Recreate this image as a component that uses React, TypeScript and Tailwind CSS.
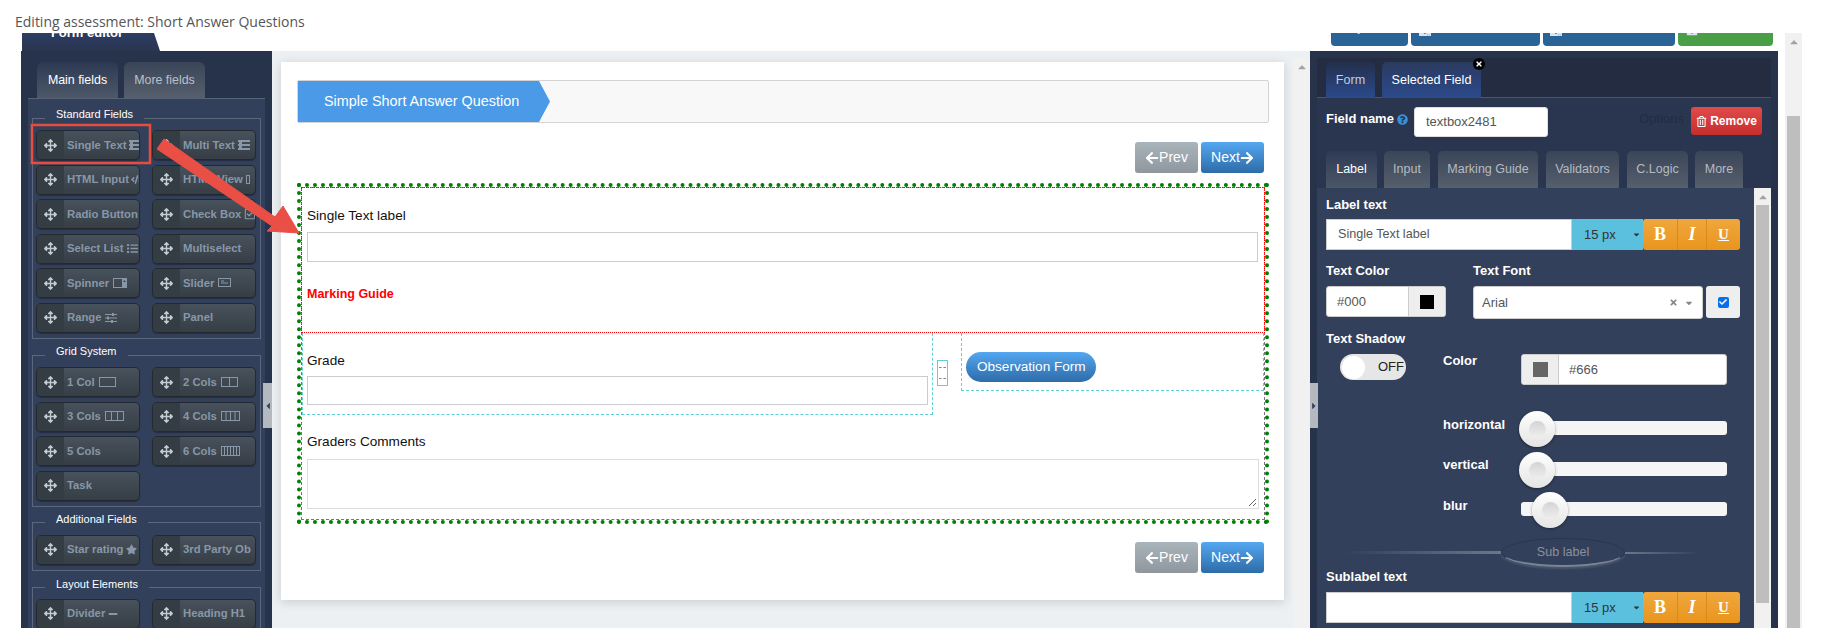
import React from "react";
import { FaArrowsAlt, FaRegTrashAlt, FaQuestionCircle, FaTimes, FaArrowLeft, FaArrowRight, FaStar, FaRegCheckSquare, FaCheck, FaCaretUp, FaCaretLeft, FaCaretRight, FaCaretDown, FaCode, FaMinus, FaList, FaDownload, FaSave } from "react-icons/fa";

const Cols = ({ n, w = 16 }: { n: number; w?: number }) => (
  <svg width={w + 1} height="11" viewBox={`0 0 ${w + 1} 11`} fill="none" stroke="currentColor" className="shrink-0 ml-[4px]">
    <rect x="0.5" y="0.5" width={w} height="9" />
    {Array.from({ length: n - 1 }).map((_, i) => (
      <line key={i} x1={0.5 + ((i + 1) * w) / n} x2={0.5 + ((i + 1) * w) / n} y1="0.5" y2="9.5" />
    ))}
  </svg>
);
const TextIc = () => (
  <svg width="12" height="10" viewBox="0 0 12 10" fill="currentColor" className="shrink-0 ml-[3px]">
    <rect x="0" y="0" width="12" height="2" /><rect x="0" y="4" width="12" height="2" /><rect x="0" y="8" width="12" height="2" /><rect x="1" y="1" width="3" height="8" fill="#8797a8" />
  </svg>
);

const Btn = ({ label, icon }: { label?: string; icon?: React.ReactNode }) => (
  <div className="flex h-[30px] w-[104px] rounded-[5px] border border-[#23292f] overflow-hidden bg-gradient-to-b from-[#48525c] to-[#363d45] text-[#8797a8] font-bold text-[11.3px] shadow-[0_1px_1px_rgba(0,0,0,0.3)]">
    <div className="w-[27px] shrink-0 flex items-center justify-center bg-[#343c44] text-[#c2cbd3] text-[13px]"><FaArrowsAlt /></div>
    <div className="flex items-center pl-[3px] whitespace-nowrap">{label}{icon}</div>
  </div>
);

const Field = ({ title, children, cls, lb = "pb-[8px]" }: { title: string; children: React.ReactNode; cls: string; lb?: string }) => (
  <fieldset className={`mx-[4px] border border-[#5c677b] px-[3px] pt-[1px] pb-[5px] ${cls}`}>
    <legend className={`ml-[9px] px-[11px] ${lb} text-[11px] leading-[14px] text-white`}>{title}</legend>
    <div className="grid grid-cols-[104px_104px] gap-x-[12px] gap-y-[4.5px]">{children}</div>
  </fieldset>
);

const WizBtn = ({ prev }: { prev?: boolean }) => (
  <div className={`flex items-center justify-center w-[63px] h-[31px] rounded-[3px] text-white text-[14px] ${prev ? "bg-gradient-to-b from-[#a9b5bb] to-[#8f979d]" : "bg-gradient-to-b from-[#54a7f1] to-[#2d6ca8]"}`}>
    {prev ? <><FaArrowLeft className="text-[14px]" />Prev</> : <>Next<FaArrowRight className="text-[14px]" /></>}
  </div>
);

const STab = ({ label, w, active, ml }: { label: string; w: string; active?: boolean; ml: string }) => (
  <div className={`${w} ${ml} h-[37px] rounded-t-[5px] flex items-center justify-center text-[12.5px] bg-gradient-to-b ${active ? "from-[#2f3b55] to-[#4b5766] text-white" : "from-[#3a4559] to-[#565f6b] text-[#b4bbc4]"}`}>{label}</div>
);

const Fmt = () => (
  <>
    <div className="w-[71px] bg-[#5bc0de] flex items-center pl-[12px] text-[13px] text-[#333] relative">15 px<FaCaretDown className="absolute right-[2px] text-[9px]" /></div>
    <div className="w-[34px] bg-gradient-to-b from-[#f0a73c] to-[#e8951a] rounded-l-[3px] flex items-center justify-center text-white font-bold text-[18px] font-['Liberation_Serif',serif]">B</div>
    <div className="w-[30px] bg-gradient-to-b from-[#f0a73c] to-[#e8951a] border-x border-[#d98a18] flex items-center justify-center text-white font-bold italic text-[18px] font-['Liberation_Serif',serif]">I</div>
    <div className="w-[33px] bg-gradient-to-b from-[#f0a73c] to-[#e8951a] rounded-r-[3px] flex items-center justify-center text-white font-bold underline text-[15px] font-['Liberation_Serif',serif]">U</div>
  </>
);

const Slider = ({ left, mt, label, lmt }: { left: string; mt: string; label: string; lmt: string }) => (
  <div className={`flex ${mt}`}>
    <div className={`w-[78px] ${lmt} text-white font-bold text-[13px] leading-[15px]`}>{label}</div>
    <div className="w-[206px] h-[14px] rounded-[3px] bg-[#f5f5f5] relative">
      <div className={`absolute ${left} -top-[10px] w-[36px] h-[36px] rounded-full bg-gradient-to-b from-[#fff] to-[#e4e4e4] shadow-[0_1px_3px_rgba(0,0,0,0.4)] flex items-center justify-center`}>
        <div className="w-[17px] h-[17px] rounded-full bg-gradient-to-b from-[#d4d4d4] to-[#efefef]" />
      </div>
    </div>
  </div>
);

const Scroll = ({ cls, thumb }: { cls: string; thumb: string }) => (
  <div className={`w-[17px] shrink-0 bg-[#f1f1f1] flex flex-col items-center ${cls}`}>
    <FaCaretUp className="text-[#a3a3a3] text-[12px] mt-[3px] shrink-0" />
    <div className={`w-[13px] bg-[#bebebe] ${thumb}`} />
  </div>
);

export default function App() {
  return (
    <div className="relative w-[1821px] h-[628px] overflow-hidden bg-white font-['Liberation_Sans',Arial,sans-serif]">
      <div className="h-[33px] pl-[15px] pt-[12px] text-[14px] leading-[19px] text-[#555] font-['Open_Sans',sans-serif]">Editing assessment: Short Answer Questions</div>
      <div className="flex h-[595px] pl-[21px]">
        <div className="w-[1757px] flex flex-col shrink-0">
          <div className="h-[18px] shrink-0 overflow-hidden flex relative">
            <div className="ml-[1px] w-[138px] h-[18px] bg-gradient-to-b from-[#2c3c63] to-[#2a3550] [clip-path:polygon(0_0,132px_0,100%_100%,0_100%)] relative">
              <div className="-mt-[9px] text-center pr-[8px] text-white font-bold text-[13px] leading-[18px]">Form editor</div>
            </div>
            <div className="ml-auto mr-[5px] flex gap-[3px] h-[34px] -mt-[21px] text-[#dbe6f0] text-[13px] font-bold">
              <div className="w-[77px] bg-[#2a6496] rounded-b-[4px] flex items-end justify-center pb-[10px]">Update</div>
              <div className="w-[129px] bg-[#2a6496] rounded-b-[4px] flex items-end justify-center gap-[5px] pb-[10px]"><FaDownload className="text-[12px]" />Grader Preview</div>
              <div className="w-[132px] bg-[#2a6496] rounded-b-[4px] flex items-end justify-center gap-[5px] pb-[10px]"><FaDownload className="text-[12px]" />Student Preview</div>
              <div className="w-[95px] bg-[#4a9e46] rounded-b-[4px] flex items-end justify-center gap-[5px] pb-[10px]"><FaSave className="text-[12px]" />Save form</div>
            </div>
          </div>
          <div className="flex-1 flex bg-[#27324b] min-h-0">
            {/* left */}
            <div className="w-[251px] shrink-0 pt-[11px]">
              <div className="flex h-[36px] pl-[16px] gap-[6px]">
                <div className="w-[81px] rounded-t-[6px] bg-gradient-to-b from-[#2d3953] to-[#4d5968] text-white text-[12.4px] flex items-center justify-center">Main fields</div>
                <div className="w-[81px] rounded-t-[6px] bg-gradient-to-b from-[#3a4559] to-[#565f6c] text-[#b9c0c8] text-[12.4px] flex items-center justify-center">More fields</div>
              </div>
              <div className="ml-[7px] w-[237px] h-[530px] overflow-hidden bg-[#33405b] border-t border-[#566176]">
                <Field title="Standard Fields" cls="mt-[8px]">
                  <Btn label="Single Text" icon={<TextIc />} />
                  <Btn label="Multi Text" icon={<TextIc />} />
                  <Btn label="HTML Input" icon={<FaCode className="ml-[2px] text-[11px]" />} />
                  <Btn label="HTML View" icon={<span className="ml-[3px] inline-block w-[4px] h-[9px] border border-current" />} />
                  <Btn label="Radio Button" />
                  <Btn label="Check Box" icon={<FaRegCheckSquare className="ml-[3px] text-[12px]" />} />
                  <Btn label="Select List" icon={<FaList className="ml-[3px] text-[11px]" />} />
                  <Btn label="Multiselect" />
                  <Btn label="Spinner" icon={<svg width="14" height="10" viewBox="0 0 14 10" fill="currentColor" className="ml-[4px]"><path d="M0 0h9v1H1v8h8v1H0zM9 0h5v10H9zM10 4h3L11.500 2zM10 6h3l-1.500 2z" /></svg>} />
                  <Btn label="Slider" icon={<svg width="13" height="11" viewBox="0 0 13 11" fill="none" stroke="currentColor" className="ml-[4px]"><rect x="0.500" y="0.500" width="12" height="8" /><path d="M3 5h7M3 3h3" /></svg>} />
                  <Btn label="Range" icon={<svg width="12" height="10" viewBox="0 0 12 10" stroke="currentColor" fill="none" className="ml-[3px]"><path d="M0 1.500h12M0 5h12M0 8.500h12" /><path d="M8 0v3M3 3.500v3M7 7v3" strokeWidth="2" /></svg>} />
                  <Btn label="Panel" />
                </Field>
                <Field title="Grid System" cls="mt-[5.5px]">
                  <Btn label="1 Col" icon={<Cols n={1} />} />
                  <Btn label="2 Cols" icon={<Cols n={2} />} />
                  <Btn label="3 Cols" icon={<Cols n={3} w={18} />} />
                  <Btn label="4 Cols" icon={<Cols n={4} w={18} />} />
                  <Btn label="5 Cols" />
                  <Btn label="6 Cols" icon={<Cols n={6} w={18} />} />
                  <Btn label="Task" />
                </Field>
                <Field title="Additional Fields" cls="mt-[5px]">
                  <Btn label="Star rating" icon={<FaStar className="ml-[2px] text-[11px]" />} />
                  <Btn label="3rd Party Ob" />
                </Field>
                <Field title="Layout Elements" cls="mt-[6px]" lb="pb-[7px]">
                  <Btn label="Divider" icon={<FaMinus className="ml-[3px] text-[10px]" />} />
                  <Btn label="Heading H1" />
                </Field>
              </div>
            </div>
            {/* center */}
            <div className="w-[1038px] shrink-0 bg-[#ecf0f3] flex relative">
              <div className="absolute -left-[9px] top-[332px] w-[9px] h-[45px] bg-[#b4b8bf] flex items-center justify-center text-[#33405b]"><FaCaretLeft className="text-[10px] shrink-0" /></div>
              <div className="absolute -right-[8px] top-[332px] w-[8px] h-[45px] bg-[#b4b8bf] flex items-center justify-center text-[#33405b] z-10"><FaCaretRight className="text-[10px] shrink-0" /></div>
              <div className="ml-[9px] mt-[11px] w-[1003px] h-[538px] bg-white shadow-[0_2px_10px_rgba(0,0,0,0.15)] pl-[16px] pr-[15px] pt-[18px] shrink-0">
                <div className="h-[43px] border border-[#d4d4d4] rounded-[2px] bg-[#f8f8f8] flex">
                  <div className="w-[252px] h-[41px] bg-[#4a9ae8] [clip-path:polygon(0_0,241px_0,100%_50%,241px_100%,0_100%)] text-white text-[14.4px] flex items-center pl-[26px]">Simple Short Answer Question</div>
                </div>
                <div className="flex justify-end pr-[5px] gap-[3px] mt-[19px]"><WizBtn prev /><WizBtn /></div>
                <div className="mt-[10px] h-[341px] border-[4px] border-dotted border-[#008000]">
                  <div className="h-full border border-dashed border-[#777] text-[13.6px] text-[#111]">
                    <div className="h-[146px] -mt-px -mx-px border border-dotted border-[#f00] pl-[5px] pr-[6px] pt-[18px]">
                      <div className="leading-[20px]">Single Text label</div>
                      <div className="mt-[6px] h-[30px] border border-[#ccc]" />
                      <div className="mt-[22px] text-[#f00] font-bold text-[12.5px] leading-[20px]">Marking Guide</div>
                    </div>
                    <div className="flex items-start">
                      <div className="w-[632px] h-[82px] border border-dashed border-t-0 border-[#5fd0d6] pl-[4px] pr-[4px] pt-[18px]">
                        <div className="leading-[20px]">Grade</div>
                        <div className="mt-[5px] h-[29px] border border-[#ccc]" />
                      </div>
                      <div className="ml-[4px] mt-[27px] w-[11px] h-[26px] border border-[#5fd0d6] flex flex-col items-center justify-center gap-[2px]">
                        <div className="w-[7px] h-[12px] border-y border-dashed border-[#888]" />
                      </div>
                      <div className="ml-[13px] w-[303px] h-[58px] border border-dashed border-t-0 border-[#5fd0d6] pl-[4px] pt-[19px]">
                        <div className="w-[130px] h-[30px] rounded-full bg-gradient-to-b from-[#54a7f1] to-[#2d6ca8] text-white text-[13.6px] flex items-center justify-center">Observation Form</div>
                      </div>
                    </div>
                    <div className="pl-[5px] pr-[5px] pt-[17px]">
                      <div className="leading-[20px]">Graders Comments</div>
                      <div className="mt-[7px] h-[50px] border border-[#ddd] relative">
                        <svg width="9" height="9" viewBox="0 0 9 9" stroke="#666" className="absolute right-[1px] bottom-[1px]"><path d="M1 8L8 1M5 8L8 5" /></svg>
                      </div>
                    </div>
                  </div>
                </div>
                <div className="flex justify-end pr-[5px] gap-[3px] mt-[18px]"><WizBtn prev /><WizBtn /></div>
              </div>
              <Scroll cls="ml-[9px] mt-[7px]" thumb="hidden" />
            </div>
            {/* right */}
            <div className="w-[468px] shrink-0 px-[7px] pt-[7px] flex flex-col min-h-0">
              <div className="h-[40px] shrink-0 bg-[#232c40] flex items-end pl-[9px] gap-[7px] border-b border-[#4c566a]">
                <div className="w-[49px] h-[36px] -mb-px rounded-t-[5px] bg-gradient-to-b from-[#232f4b] to-[#2b4a8c] text-[#c5ccd6] text-[12.6px] flex items-center justify-center">Form</div>
                <div className="w-[99px] h-[36px] -mb-px rounded-t-[5px] bg-gradient-to-b from-[#2b3a5f] to-[#2b4a8c] text-white text-[12.6px] flex items-center justify-center relative">
                  Selected Field
                  <div className="absolute -right-[4px] -top-[4px] w-[12px] h-[12px] rounded-full bg-black text-white flex items-center justify-center text-[8px]"><FaTimes /></div>
                </div>
              </div>
              <div className="h-[53px] shrink-0 bg-[#2a3550] flex pl-[9px] pr-[9px] relative">
                <div className="mt-[13px] text-white font-bold text-[13px] leading-[16px] flex items-center gap-[3px] h-[16px]">Field name <FaQuestionCircle className="text-[#3b8fd6] text-[11px]" /></div>
                <div className="ml-[6px] mt-[9px] w-[134px] h-[30px] bg-white rounded-[3px] border border-[#ddd] flex items-center pl-[11px] text-[13px] text-[#555]">textbox2481</div>
                <div className="ml-auto mt-[13px] text-[#232c40] text-[13px] leading-[16px]">Options</div>
                <div className="ml-[7px] mt-[9px] w-[71px] h-[28px] rounded-[3px] bg-gradient-to-b from-[#e04a4a] to-[#c72e2e] text-white font-bold text-[12px] flex items-center justify-center gap-[3px]"><FaRegTrashAlt className="text-[11px]" />Remove</div>
              </div>
              <div className="h-[37px] shrink-0 bg-[#2a3550] flex pl-[9px]">
                <STab label="Label" w="w-[51px]" ml="" active />
                <STab label="Input" w="w-[46px]" ml="ml-[7px]" />
                <STab label="Marking Guide" w="w-[100px]" ml="ml-[8px]" />
                <STab label="Validators" w="w-[73px]" ml="ml-[8px]" />
                <STab label="C.Logic" w="w-[61px]" ml="ml-[8px]" />
                <STab label="More" w="w-[48px]" ml="ml-[7px]" />
              </div>
              <div className="flex-1 flex min-h-0">
                <div className="w-[437px] shrink-0 bg-[#33405b] px-[9px] overflow-hidden">
                  <div className="mt-[9px] text-white font-bold text-[13px] leading-[16px]">Label text</div>
                  <div className="mt-[6px] flex h-[31px]">
                    <div className="w-[246px] bg-white border border-[#ccc] flex items-center pl-[11px] text-[12.6px] text-[#555]">Single Text label</div>
                    <Fmt />
                  </div>
                  <div className="mt-[13px] flex text-white font-bold text-[13px] leading-[16px]"><div className="w-[147px]">Text Color</div><div>Text Font</div></div>
                  <div className="mt-[7px] flex items-start">
                    <div className="flex h-[31px] w-[120px] rounded-[3px] overflow-hidden border border-[#ccc] bg-white">
                      <div className="flex-1 flex items-center pl-[10px] text-[13px] text-[#555]">#000</div>
                      <div className="w-[37px] bg-[#eee] border-l border-[#ccc] flex items-center justify-center"><div className="w-[14px] h-[14px] bg-black" /></div>
                    </div>
                    <div className="ml-[27px] w-[230px] h-[33px] rounded-[3px] bg-white border border-[#ccc] flex items-center pl-[8px] pr-[8px] text-[13px] text-[#555]">
                      Arial<FaTimes className="ml-auto text-[9px] text-[#888]" /><FaCaretDown className="ml-[6px] text-[10px] text-[#888]" />
                    </div>
                    <div className="ml-[3px] w-[34px] h-[32px] rounded-[3px] bg-[#eee] flex items-center justify-center"><div className="w-[11px] h-[11px] rounded-[2px] bg-[#0b6fe8] flex items-center justify-center text-white text-[8px]"><FaCheck /></div></div>
                  </div>
                  <div className="mt-[12px] text-white font-bold text-[13px] leading-[16px]">Text Shadow</div>
                  <div className="mt-[7px] flex items-start">
                    <div className="ml-[14px] w-[66px] h-[26px] rounded-full bg-[#e6e6e6] flex items-center pl-[2px] relative">
                      <div className="w-[23px] h-[23px] rounded-full bg-white" />
                      <span className="ml-[13px] text-[13px] text-[#222]">OFF</span>
                    </div>
                    <div className="ml-[37px] -mt-[1px] w-[78px] text-white font-bold text-[13px] leading-[16px]">Color</div>
                    <div className="flex h-[31px] w-[206px] rounded-[3px] overflow-hidden border border-[#ccc] bg-white">
                      <div className="w-[37px] bg-[#eee] border-r border-[#ccc] flex items-center justify-center"><div className="w-[15px] h-[15px] bg-[#666]" /></div>
                      <div className="flex items-center pl-[10px] text-[13px] text-[#555]">#666</div>
                    </div>
                  </div>
                  <div className="ml-[117px]">
                    <Slider left="-left-[2px]" mt="mt-[36px]" label="horizontal" lmt="-mt-[4px]" />
                    <Slider left="-left-[2px]" mt="mt-[27px]" label="vertical" lmt="-mt-[5px]" />
                    <Slider left="left-[11px]" mt="mt-[26px]" label="blur" lmt="-mt-[4px]" />
                  </div>
                  <div className="mt-[22px] flex items-center h-[29px] pl-[19px]">
                    <div className="w-[156px] h-[3px] bg-gradient-to-r from-transparent to-[#6d778a]" />
                    <div className="w-[124px] h-[29px] shrink-0 rounded-[50%] border border-[#2b3650] border-b-2 border-b-[#7b8494] shadow-[0_2px_2px_rgba(255,255,255,0.12)] flex items-center justify-center text-[12.6px] text-[#8a919c]">Sub label</div>
                    <div className="w-[75px] h-[2px] bg-gradient-to-l from-transparent to-[#6d778a]" />
                  </div>
                  <div className="mt-[2px] text-white font-bold text-[13px] leading-[16px]">Sublabel text</div>
                  <div className="mt-[7px] flex h-[31px]">
                    <div className="w-[246px] bg-white border border-[#ccc]" />
                    <Fmt />
                  </div>
                </div>
                <Scroll cls="" thumb="h-[398px] mt-[2px]" />
              </div>
            </div>
          </div>
        </div>
        <Scroll cls="ml-[7px]" thumb="h-[512px] mt-[68px]" />
      </div>
      {/* annotations */}
      <svg width="320" height="250" viewBox="0 0 320 250" className="absolute left-0 top-0 pointer-events-none" fill="none">
        <rect x="32" y="125" width="118" height="38" stroke="#e74c3c" strokeWidth="2.5" />
        <path d="M157 149L164 139L275 217L283 206L299 233L267 231L272 226Z" fill="#e94f45" stroke="#e94f45" strokeWidth="1" strokeLinejoin="round" />
      </svg>
    </div>
  );
}
